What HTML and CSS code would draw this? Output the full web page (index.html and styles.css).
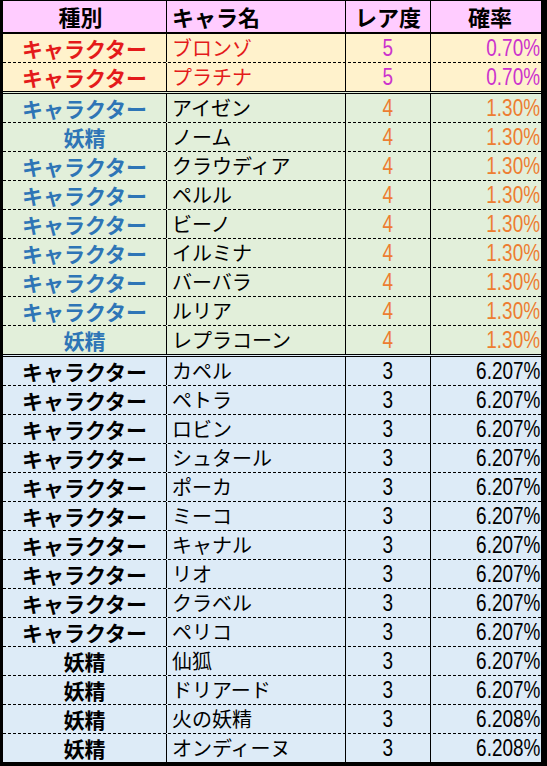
FILE: index.html
```html
<!DOCTYPE html>
<html lang="ja">
<head>
<meta charset="utf-8">
<title>排出確率</title>
<link rel="stylesheet" href="styles.css">
</head>
<body>
<div class="sheet">
  <div class="row head">
    <div class="c1">種別</div>
    <div class="c2">キャラ名</div>
    <div class="c3">レア度</div>
    <div class="c4">確率</div>
  </div>

  <div class="group g5">
    <div class="row"><div class="c1">キャラクター</div><div class="c2">ブロンゾ</div><div class="c3"><span class="num">5</span></div><div class="c4"><span class="num">0.70%</span></div></div>
    <div class="row"><div class="c1">キャラクター</div><div class="c2">プラチナ</div><div class="c3"><span class="num">5</span></div><div class="c4"><span class="num">0.70%</span></div></div>
  </div>

  <div class="group g4">
    <div class="row"><div class="c1">キャラクター</div><div class="c2">アイゼン</div><div class="c3"><span class="num">4</span></div><div class="c4"><span class="num">1.30%</span></div></div>
    <div class="row"><div class="c1">妖精</div><div class="c2">ノーム</div><div class="c3"><span class="num">4</span></div><div class="c4"><span class="num">1.30%</span></div></div>
    <div class="row"><div class="c1">キャラクター</div><div class="c2">クラウディア</div><div class="c3"><span class="num">4</span></div><div class="c4"><span class="num">1.30%</span></div></div>
    <div class="row"><div class="c1">キャラクター</div><div class="c2">ペルル</div><div class="c3"><span class="num">4</span></div><div class="c4"><span class="num">1.30%</span></div></div>
    <div class="row"><div class="c1">キャラクター</div><div class="c2">ビーノ</div><div class="c3"><span class="num">4</span></div><div class="c4"><span class="num">1.30%</span></div></div>
    <div class="row"><div class="c1">キャラクター</div><div class="c2">イルミナ</div><div class="c3"><span class="num">4</span></div><div class="c4"><span class="num">1.30%</span></div></div>
    <div class="row"><div class="c1">キャラクター</div><div class="c2">バーバラ</div><div class="c3"><span class="num">4</span></div><div class="c4"><span class="num">1.30%</span></div></div>
    <div class="row"><div class="c1">キャラクター</div><div class="c2">ルリア</div><div class="c3"><span class="num">4</span></div><div class="c4"><span class="num">1.30%</span></div></div>
    <div class="row"><div class="c1">妖精</div><div class="c2">レプラコーン</div><div class="c3"><span class="num">4</span></div><div class="c4"><span class="num">1.30%</span></div></div>
  </div>

  <div class="group g3">
    <div class="row"><div class="c1">キャラクター</div><div class="c2">カペル</div><div class="c3"><span class="num">3</span></div><div class="c4"><span class="num">6.207%</span></div></div>
    <div class="row"><div class="c1">キャラクター</div><div class="c2">ペトラ</div><div class="c3"><span class="num">3</span></div><div class="c4"><span class="num">6.207%</span></div></div>
    <div class="row"><div class="c1">キャラクター</div><div class="c2">ロビン</div><div class="c3"><span class="num">3</span></div><div class="c4"><span class="num">6.207%</span></div></div>
    <div class="row"><div class="c1">キャラクター</div><div class="c2">シュタール</div><div class="c3"><span class="num">3</span></div><div class="c4"><span class="num">6.207%</span></div></div>
    <div class="row"><div class="c1">キャラクター</div><div class="c2">ポーカ</div><div class="c3"><span class="num">3</span></div><div class="c4"><span class="num">6.207%</span></div></div>
    <div class="row"><div class="c1">キャラクター</div><div class="c2">ミーコ</div><div class="c3"><span class="num">3</span></div><div class="c4"><span class="num">6.207%</span></div></div>
    <div class="row"><div class="c1">キャラクター</div><div class="c2">キャナル</div><div class="c3"><span class="num">3</span></div><div class="c4"><span class="num">6.207%</span></div></div>
    <div class="row"><div class="c1">キャラクター</div><div class="c2">リオ</div><div class="c3"><span class="num">3</span></div><div class="c4"><span class="num">6.207%</span></div></div>
    <div class="row"><div class="c1">キャラクター</div><div class="c2">クラベル</div><div class="c3"><span class="num">3</span></div><div class="c4"><span class="num">6.207%</span></div></div>
    <div class="row"><div class="c1">キャラクター</div><div class="c2">ペリコ</div><div class="c3"><span class="num">3</span></div><div class="c4"><span class="num">6.207%</span></div></div>
    <div class="row"><div class="c1">妖精</div><div class="c2">仙狐</div><div class="c3"><span class="num">3</span></div><div class="c4"><span class="num">6.207%</span></div></div>
    <div class="row"><div class="c1">妖精</div><div class="c2">ドリアード</div><div class="c3"><span class="num">3</span></div><div class="c4"><span class="num">6.207%</span></div></div>
    <div class="row"><div class="c1">妖精</div><div class="c2">火の妖精</div><div class="c3"><span class="num">3</span></div><div class="c4"><span class="num">6.208%</span></div></div>
    <div class="row"><div class="c1">妖精</div><div class="c2">オンディーヌ</div><div class="c3"><span class="num">3</span></div><div class="c4"><span class="num">6.208%</span></div></div>
  </div>
</div>
</body>
</html>
```

FILE: styles.css
```css
html, body {
  margin: 0;
  padding: 0;
  background: #000;
}

body {
  width: 547px;
  height: 766px;
  overflow: hidden;
  font-family: "Noto Sans CJK JP", "Noto Sans", sans-serif;
  color: #000;
}

.sheet {
  margin: 1px 6px 4px 3px;
  width: 538px;
  display: flex;
  flex-direction: column;
}

.row {
  display: grid;
  grid-template-columns: 163px 179px 85px 111px;
  height: 29px;
  box-sizing: border-box;
  border-top: 1px dashed #000;
  font-size: 20px;
  line-height: 28px;
}

.row > div {
  box-sizing: border-box;
  white-space: nowrap;
  overflow: hidden;
}

.row > div + div {
  border-left: 1px solid #000;
}

.c1 {
  text-align: center;
  font-weight: 700;
  font-size: 21px;
}

.c2 {
  padding-left: 5px;
}

.c3 {
  text-align: center;
}

.c4 {
  text-align: right;
  padding-right: 1px;
}

.num {
  display: inline-block;
  font-family: "Liberation Sans", Arial, sans-serif;
  font-size: 24px;
  line-height: 28px;
  transform: scaleX(0.79);
}

.c3 .num {
  transform-origin: center;
}

.c4 .num {
  transform-origin: right center;
}

/* header */
.row.head {
  height: 33px;
  border-top: none;
  border-bottom: 2px solid #000;
  background: #ffccff;
  font-weight: 700;
  line-height: 31px;
}

.row.head > div {
  font-size: 22px;
}

.row.head .c1 {
  padding-right: 8px;
}

.row.head .c2 {
  padding-left: 5px;
}

.row.head .c4 {
  text-align: center;
  padding-left: 8px;
  padding-right: 0;
}

/* groups */
.group > .row:first-child {
  border-top: none;
  height: 28px;
}

.group + .group {
  border-top: 3px double #000;
}

.g5 { background: #fff2cc; }
.g5 .c1, .g5 .c2 { color: #e41a1a; }
.g5 .c3, .g5 .c4 { color: #cc33cc; }

.g4 { background: #e2efda; }
.g4 .c1 { color: #2e75b6; }
.g4 .c3, .g4 .c4 { color: #ed7d31; }

.g3 { background: #ddebf7; }
```
